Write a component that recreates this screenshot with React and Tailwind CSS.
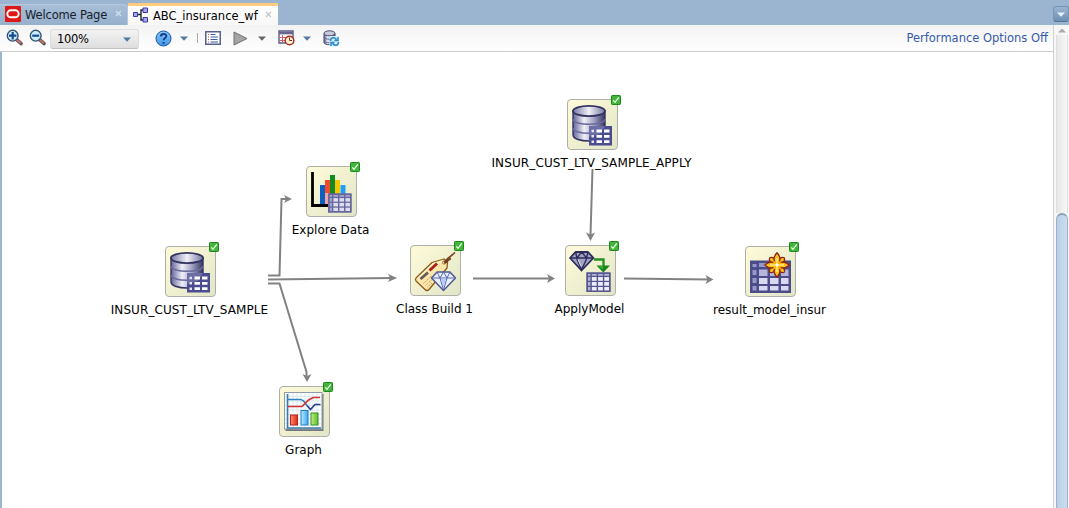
import React from "react";

function Grid({ x, y, w, h, cols, rows, t = 2, line = "#4c4c8c", fill = "#f0f0fb", header = "#a9a9d2" }) {
  const cells = [];
  const gapX = (w - cols.reduce((a, b) => a + b, 0)) / (cols.length + 1);
  const gapY = (h - rows.reduce((a, b) => a + b, 0)) / (rows.length + 1);
  let cy = y + gapY;
  rows.forEach((rh, r) => {
    let cx = x + gapX;
    cols.forEach((cw, c) => {
      cells.push(
        <rect key={r + "-" + c} x={cx} y={cy} width={cw} height={rh} fill={r === 0 || c === 0 ? header : fill} />
      );
      cx += cw + gapX;
    });
    cy += rh + gapY;
  });
  return (
    <g>
      <rect x={x} y={y} width={w} height={h} fill={line} />
      {cells}
      <rect x={x + t / 2} y={y + t / 2} width={w - t} height={h - t} fill="none" stroke={line} strokeWidth={t} />
    </g>
  );
}

function DatabaseArt() {
  return (
    <g>
      <path d="M6 12V36c0 8 32 8 32 0V12z" fill="url(#metal)" stroke="#33335f" strokeWidth="1.4" />
      <path d="M6 20c0 7 32 7 32 0M6 29c0 7 32 7 32 0" fill="none" stroke="#6a6a9c" strokeWidth="1.6" />
      <ellipse cx="22" cy="12" rx="16" ry="5.2" fill="url(#lid)" stroke="#33335f" strokeWidth="1.8" />
      <rect x="22" y="27" width="23" height="19.5" fill="#4b4b90" />
      <path d="M22 27h16l-5 8-11 3z" fill="#6d6da6" />
      <path d="M24.5 32h2.500M24.5 37.3h2.500M24.5 42.700h2.500" stroke="#e4e4f4" strokeWidth="2.600" />
      <path d="M29.500 32h5.500M37 32h5.500M29.500 37.300h5.500M37 37.300h5.500M29.500 42.700h5.500M37 42.700h5.500" stroke="#fff" strokeWidth="2.800" />
    </g>
  );
}

function ExploreArt() {
  return (
    <g>
      <path d="M6.500 6V39.500H24" fill="none" stroke="#000" strokeWidth="2.8" />
      <path d="M14 19h5v19h-5z" fill="#0b5fc0" />
      <path d="M19 14h5v24h-5z" fill="#f44a2c" />
      <path d="M24 9h5v20h-5z" fill="#118a22" />
      <path d="M29 14h5v15h-5z" fill="#f8c600" />
      <path d="M34.500 19h5v9h-5z" fill="#20a0f5" />
      <path d="M19 27h4v11h-4z" fill="#f2a3a0" />
      <Grid x={22} y={27.5} w={23.5} h={19} cols={[2.5, 4.6, 4.6, 4.6]} rows={[2, 3.5, 3.5, 3.5]} t={1.5} line="#67679e" fill="#dcdcee" header="#a4a4cd" />
    </g>
  );
}

function TagArt() {
  return (
    <g>
      <path d="M6 33L22 17.500L34 14L37.500 17L37 23L19 44.500Q17 46.500 15 44.500L6 36Q5 34.500 6 33z" fill="#fde6ac" stroke="#8a5b16" strokeWidth="1.3" strokeLinejoin="round" />
      <path d="M8 33.500L23 19L33 16" fill="none" stroke="#fff5cf" strokeWidth="1.500" />
      <path d="M10.500 34L18 27.500" stroke="#655c55" strokeWidth="2.800" />
      <path d="M19.500 25.500L27 18.500" stroke="#ad1e18" strokeWidth="2.800" />
      <path d="M13.500 38.500L22 30.500M15.500 40.500L22 34.500M17.500 42L22 38" stroke="#bd974d" strokeWidth="1" strokeDasharray="1.500 .8" />
      <circle cx="34" cy="17.500" r="1.600" fill="#fff" stroke="#a36e1d" />
      <path d="M34 17.500C37 16 36 14 39 12.500L45 7.500M34.500 18C38 17.500 37 15 41 13.500" fill="none" stroke="#6f3d20" strokeWidth="1.600" />
      <path d="M27 27H40L45.500 33L33.500 45.500L21.500 33z" fill="#e9efff" stroke="#4a5795" strokeWidth="1.400" strokeLinejoin="round" />
      <path d="M22 33H45M27 27L30 33L33.500 27L37 33L40 27M30 33L33.500 45L37 33" fill="none" stroke="#5869b0" strokeWidth="1" />
      <path d="M30.800 33.500H36.200L33.500 42.500z" fill="#b8caf5" />
    </g>
  );
}

function ApplyArt() {
  return (
    <g>
      <path d="M10.500 7H23L28.500 13L16.500 25.500L5 13z" fill="#a2a2c6" stroke="#2c2b59" strokeWidth="1.800" strokeLinejoin="round" />
      <path d="M6 13H28M10.500 7L12 13L16.700 7L21.500 13L23 7M11.500 13L16.500 25L22 13" fill="none" stroke="#2c2b59" strokeWidth="1.400" />
      <path d="M13 14.500L16 21" stroke="#e5e5f4" />
      <path d="M29 14.500h9.500v7" fill="none" stroke="#239022" strokeWidth="2.300" />
      <path d="M31.500 20.500H45L38.300 27.500z" fill="#168517" />
      <path d="M33.500 21h5l-1 3.500z" fill="#3aab32" />
      <Grid x={21.500} y={27.500} w={24} h={19.500} cols={[2.500, 4.800, 4.800, 4.800]} rows={[2, 3.700, 3.700, 3.700]} t={1.400} line="#57578f" fill="#eeeefa" header="#b2b2d5" />
    </g>
  );
}

const petalAngles = [0, 90, 180, 270];

function ResultArt() {
  return (
    <g>
      <rect x="5" y="14.500" width="41" height="32.500" fill="#4c4c8a" />
      <path d="M7.500 18h4v3h-4zM7.500 24h4v5h-4zM7.500 32h4v5h-4zM7.500 40h4v4.500h-4zM14 17h8v4h-8zM24 17h8v4h-8z" fill="#9898c8" />
      <path d="M14 23.500h8.500v6.500H14zM25 23.500h8.500v6.500H25zM36 23.500h7.500v6.500H36z" fill="#b6b6dc" />
      <path d="M14 32h8.500v6H14zM25 32h8.500v6H25zM36 32h7.500v6H36zM14 40h8.500v4.500H14zM25 40h8.500v4.500H25zM36 40h7.500v4.500H36z" fill="#d8d8f0" />
      <g stroke="#8b2515" strokeWidth="1.300" fill="#ffc01a" strokeLinejoin="round">
        {petalAngles.map((a) => (
          <path key={"d" + a} transform={`rotate(${a + 45} 32 19)`} d="M32 18C28 13.500 29.500 9.500 32 8.700C34.500 9.500 36 13.500 32 18z" />
        ))}
        {petalAngles.map((a) => (
          <path key={a} transform={`rotate(${a} 32 19)`} d="M30.500 17.500C27.500 13 29 10 32 6.800C35 10 36.500 13 33.500 17.500z" />
        ))}
      </g>
      <circle cx="32" cy="19" r="4.500" fill="#ffb300" />
      <path d="M32 12V26M25 19H39" stroke="#ffea80" strokeWidth="1.500" />
      <circle cx="32" cy="19" r="1.500" fill="#fff" />
    </g>
  );
}

function GraphArt() {
  return (
    <g>
      <rect x="6.500" y="8" width="38" height="37" fill="#77797d" />
      <rect x="5.500" y="6.500" width="37.500" height="36.500" fill="#fbfdff" stroke="#8f9ba9" />
      <path d="M10 7v35M14 7v35M18 7v35M22 7v35M26 7v35M30 7v35M34 7v35M38 7v35M6 10.500h36M6 15h36M6 19.500h36M6 24h36M6 28.500h36M6 33h36M6 37.500h36" stroke="#d2dfe9" strokeWidth=".7" />
      <path d="M8.500 8v34H42" fill="none" stroke="#3d7da5" strokeWidth="1.600" />
      <path d="M9 13.500H21C24 13.500 26 16 28 19.500" fill="none" stroke="#2e83c4" strokeWidth="1.700" />
      <path d="M28 19.500l3.500 4 4.500-5h5.500" fill="none" stroke="#293b91" strokeWidth="1.700" />
      <path d="M9 20.500h14l6-6 5-3h7" fill="none" stroke="#d63537" strokeWidth="1.700" />
      <rect x="11.500" y="29" width="7" height="10" fill="url(#redbar)" stroke="#b72219" />
      <rect x="22" y="24.500" width="7" height="14.500" fill="url(#bluebar)" stroke="#237dbe" />
      <rect x="32" y="27" width="7" height="12" fill="url(#greenbar)" stroke="#329022" />
    </g>
  );
}

function CheckBadge() {
  return (
    <svg className="absolute left-[44px] -top-[4px]" width="10" height="10" viewBox="0 0 10 10">
      <rect x=".5" y=".5" width="9" height="9" rx=".8" fill="#42b638" stroke="#1d861d" />
      <path d="M2.300 5.300l1.700 2L7.800 2.400" fill="none" stroke="#f2fff0" strokeWidth="1.300" />
    </svg>
  );
}

function WorkflowNode({ label, place, art, labelStyle = "" }) {
  return (
    <div className={"absolute flex w-[51px] flex-col items-center " + place}>
      <div className="relative h-[51px] w-[51px] shrink-0">
        <div className="h-full w-full rounded-[4px] border border-[#aeafa9] bg-linear-to-br from-[#fffbd9] to-[#e1e6c8]" />
        <svg className="absolute inset-0" width="51" height="51" viewBox="0 0 51 51">{art}</svg>
        <CheckBadge />
      </div>
      <span className={"mt-[5px] mr-[2px] text-[12px] leading-[17px] whitespace-nowrap text-black " + labelStyle}>{label}</span>
    </div>
  );
}

function Connectors() {
  return (
    <svg className="absolute inset-0" width="1053" height="456" viewBox="0 52 1053 456">
      <g fill="none" stroke="#828282" strokeWidth="2">
        <path d="M268 275.500h11.500L281.500 199h5" />
        <path d="M268 279.500L392 278" />
        <path d="M268 283.500h11.500L306.500 372v5" />
        <path d="M473 278.500h78M624 278.500l86 1M592.500 169l-2 66" />
      </g>
      <g fill="#828282">
        <path d="M292 199l-8-4 2 4-2 4z" />
        <path d="M397 278l-9-4 2 4-2 4z" />
        <path d="M307 382l-4.500-8 4.500 2 4.500-2z" />
        <path d="M555 278.500l-8-4.500 2 4.500-2 4.500z" />
        <path d="M713.500 279.500l-8-4.500 2 4.500-2 4.500z" />
        <path d="M590.500 241l-4.500-8.500 4.500 2 4.500-2z" />
      </g>
    </svg>
  );
}

function Defs() {
  return (
    <svg className="absolute" width="0" height="0" aria-hidden="true">
      <defs>
        <linearGradient id="metal">
          <stop offset="0" stopColor="#62629a" /><stop offset=".35" stopColor="#f0f0f8" />
          <stop offset=".65" stopColor="#a2a2c6" /><stop offset="1" stopColor="#343461" />
        </linearGradient>
        <linearGradient id="lid">
          <stop offset="0" stopColor="#7878a5" /><stop offset=".5" stopColor="#f0f0f7" /><stop offset="1" stopColor="#7777a3" />
        </linearGradient>
        <linearGradient id="redbar"><stop offset="0" stopColor="#ff8b6b" /><stop offset="1" stopColor="#dc2916" /></linearGradient>
        <linearGradient id="bluebar"><stop offset="0" stopColor="#b9eaff" /><stop offset="1" stopColor="#3ca8ed" /></linearGradient>
        <linearGradient id="greenbar"><stop offset="0" stopColor="#c3ee83" /><stop offset="1" stopColor="#5fbb2d" /></linearGradient>
        <linearGradient id="help" x2="0" y2="1"><stop offset="0" stopColor="#8cc8fb" /><stop offset="1" stopColor="#3f93e6" /></linearGradient>
      </defs>
    </svg>
  );
}

function Magnifier({ plus }) {
  return (
    <svg width="17" height="17" viewBox="0 0 17 17" className="mb-[2px] shrink-0">
      <path d="M10.500 10.500l4.500 4" stroke="#4d4d55" strokeWidth="3.600" strokeLinecap="round" />
      <path d="M10.500 10.500l4 3.500" stroke="#cf7066" strokeWidth="1.800" strokeLinecap="round" />
      <circle cx="6.700" cy="6.700" r="5.400" fill="#caedff" stroke="#36556e" strokeWidth="1.400" />
      <path d={plus ? "M3 6.700h7.400M6.700 3v7.400" : "M3.200 6.700h7"} stroke="#164b94" strokeWidth="2.200" />
    </svg>
  );
}

function Caret({ color = "#5378a2" }) {
  return (
    <svg width="8" height="5" viewBox="0 0 8 5" className="shrink-0"><path d="M0 .5h8L4 4.800z" fill={color} /></svg>
  );
}

function TabClose({ color }) {
  return (
    <svg width="7" height="7" viewBox="0 0 7 7" className="mb-[3px] shrink-0"><path d="M1 1l5 5M6 1L1 6" stroke={color} strokeWidth="1.400" /></svg>
  );
}

function TabBar() {
  return (
    <div className="flex h-[25px] bg-[#9bb5d1]">
      <div className="flex w-[128px] items-end pt-[4px]">
        <div className="flex h-[21px] w-full items-center rounded-tr-[4px] border-t border-r border-[#b4c7dc] bg-linear-to-b from-[#a8bed7] to-[#96afcb] pl-[5px]">
          <svg width="16" height="16" viewBox="0 0 16 16" className="mb-[2px] shrink-0">
            <rect width="16" height="16" rx="1" fill="#dc1917" />
            <rect x="2.300" y="4.300" width="11.400" height="7" rx="3.500" fill="none" stroke="#fff" strokeWidth="1.900" />
          </svg>
          <span className="ml-[4px] w-[90px] text-[11.500px] leading-[16px] tracking-[-0.160px] whitespace-nowrap text-[#16202d]">Welcome Page</span>
          <TabClose color="#d2deeb" />
        </div>
      </div>
      <div className="mt-[3px] flex h-[22px] w-[150px] items-center border-t-[3px] border-[#ffcb7d] bg-linear-to-b from-white to-[#f7f7f7] pl-[4px]">
        <svg width="17" height="16" viewBox="0 0 17 16" className="mb-[2px] shrink-0">
          <path d="M5 7.500h4M12 3H9v10h3" fill="none" stroke="#20202c" strokeWidth="1.400" />
          <g fill="#a3a7f2" stroke="#3939a0"><path d="M1.500 5.500h4v4h-4zM11 1h4.500v4.500H11zM11 10.500h4.500V15H11z" /></g>
        </svg>
        <span className="ml-[4px] w-[112px] text-[11.500px] leading-[16px] whitespace-nowrap text-black">ABC_insurance_wf</span>
        <TabClose color="#c6c6c6" />
      </div>
      <div className="mt-[6px] ml-auto flex h-[16px] w-[16px] items-center justify-center rounded-[3px] border border-[#7596b8] border-b-[#4e7399] bg-linear-to-b from-[#9bb5d1] to-[#708fb2]">
        <Caret color="#e6f3ff" />
      </div>
    </div>
  );
}

function Toolbar() {
  return (
    <div className="flex h-[27px] items-center border-b border-[#cccccc] bg-linear-to-b from-[#f3f3f3] to-white pr-[5px] pl-[6px]">
      <Magnifier plus />
      <div className="ml-[6px] flex"><Magnifier /></div>
      <div className="mt-[2px] ml-[4px] flex h-[20px] w-[89px] items-center rounded-[3px] border border-[#dddddd] border-b-[#c2c2c2] bg-linear-to-b from-[#f3f3f3] to-[#dedede] pr-[7px] pl-[6px]">
        <span className="flex-1 text-[11.500px] leading-[16px] tracking-[-0.3px]">100%</span>
        <Caret />
      </div>
      <svg width="17" height="17" viewBox="0 0 17 17" className="ml-[16px] shrink-0">
        <circle cx="8.500" cy="8.500" r="7.500" fill="url(#help)" stroke="#1454a4" />
        <path d="M5.800 6.500c.2-3.500 5.700-3.200 5.500-.2-.1 1.800-2.700 1.700-2.700 4M8.600 12v1.800" fill="none" stroke="#123f86" strokeWidth="1.900" />
      </svg>
      <div className="ml-[8px] flex"><Caret /></div>
      <div className="ml-[9px] h-[10px] w-px bg-[#aaaaaa]" />
      <svg width="16" height="14" viewBox="0 0 16 14" className="ml-[7px] shrink-0">
        <rect x=".75" y=".75" width="14.500" height="12.500" fill="#fff" stroke="#55628e" strokeWidth="1.500" />
        <path d="M3 3.500h1M3 6h1M3 8.500h1M3 11h1" stroke="#cd4a49" strokeWidth="1.200" />
        <path d="M5.500 3.500h5M5.500 6H13M5.500 8.500h7M5.500 11H13" stroke="#365ea2" strokeWidth="1.200" />
      </svg>
      <svg width="15" height="15" viewBox="0 0 15 15" className="ml-[12px] shrink-0"><path d="M1 1l13 6.500L1 14z" fill="#a5a5a5" stroke="#707070" /></svg>
      <div className="ml-[10px] flex"><Caret color="#666666" /></div>
      <svg width="17" height="16" viewBox="0 0 17 16" className="ml-[12px] shrink-0">
        <path d="M1 1h14v12H1z" fill="#fff" stroke="#5a5b83" strokeWidth="1.400" />
        <path d="M1 3h14" stroke="#66668c" strokeWidth="2.600" />
        <path d="M2 7.500h6M2 10.500h6M4.500 5v7" stroke="#da5965" />
        <circle cx="11.500" cy="10.500" r="4.300" fill="#fff2ce" stroke="#ac2d22" strokeWidth="1.500" />
        <path d="M11.500 7.500v3h2.500" fill="none" stroke="#762b1f" />
      </svg>
      <div className="ml-[8px] flex"><Caret /></div>
      <svg width="17" height="17" viewBox="0 0 17 17" className="ml-[12px] shrink-0">
        <path d="M1 3.500v9c0 3 11 3 11 0v-9z" fill="url(#metal)" stroke="#48486f" />
        <path d="M1 7c0 3 11 3 11 0M1 10.500c0 3 11 3 11 0" fill="none" stroke="#646486" />
        <ellipse cx="6.500" cy="3.300" rx="5.500" ry="2.500" fill="#c9c9da" stroke="#48486f" />
        <path d="M6.500 6h9v10.500h-9z" fill="#d4edff" />
        <path d="M7.500 11c0-4 4-4 6-1.500M15 7v3.500h-3.500M15.500 12c0 4-4 4-6 1.500M8 16v-3.500h3.500" fill="none" stroke="#2388c9" strokeWidth="1.500" />
      </svg>
      <span className="ml-auto text-[11.500px] leading-[16px] whitespace-nowrap text-[#365aab]">Performance Options Off</span>
    </div>
  );
}

function Scrollbar() {
  return (
    <div className="flex w-[16px] shrink-0 flex-col border-l border-[#d1d1d1] bg-[#f7f7f7] pr-px pl-[2px]">
      <div className="flex h-[10px] items-center justify-center"><svg width="8" height="5" viewBox="0 0 8 5"><path d="M0 4.500h8L4 .5z" fill="#aaaaaa" /></svg></div>
      <div className="h-[178px] border-x border-[#dfdfdf] bg-linear-to-r from-[#e7e7e7] to-[#f7f7f7]" />
      <div className="flex-1 rounded-t-[6px] border-x border-t-[2px] border-[#9cb1c7] border-t-[#8aa0b7] bg-linear-to-r from-[#b9cfe5] to-[#cbdff1]" />
    </div>
  );
}

export default function App() {
  return (
    <div className="flex h-[508px] w-[1069px] flex-col overflow-hidden bg-white [font-family:'DejaVu_Sans',sans-serif]">
      <Defs />
      <TabBar />
      <div className="flex min-h-0 flex-1">
        <main className="flex min-w-0 flex-1 flex-col">
          <Toolbar />
          <div className="relative flex-1 overflow-hidden bg-white">
            <Connectors />
            <WorkflowNode place="left-[165px] top-[194px]" label="INSUR_CUST_LTV_SAMPLE" labelStyle="tracking-[0.080px]" art={<DatabaseArt />} />
            <WorkflowNode place="left-[306px] top-[114px]" label="Explore Data" art={<ExploreArt />} />
            <WorkflowNode place="left-[567px] top-[47px]" label="INSUR_CUST_LTV_SAMPLE_APPLY" labelStyle="tracking-[0.120px]" art={<DatabaseArt />} />
            <WorkflowNode place="left-[410px] top-[193px]" label="Class Build 1" art={<TagArt />} />
            <WorkflowNode place="left-[565px] top-[193px]" label="ApplyModel" art={<ApplyArt />} />
            <WorkflowNode place="left-[745px] top-[194px]" label="result_model_insur" art={<ResultArt />} />
            <WorkflowNode place="left-[279px] top-[334px]" label="Graph" art={<GraphArt />} />
            <div className="absolute inset-y-0 left-0 w-[2px] bg-[#9bb5d1]" />
          </div>
        </main>
        <Scrollbar />
      </div>
    </div>
  );
}
